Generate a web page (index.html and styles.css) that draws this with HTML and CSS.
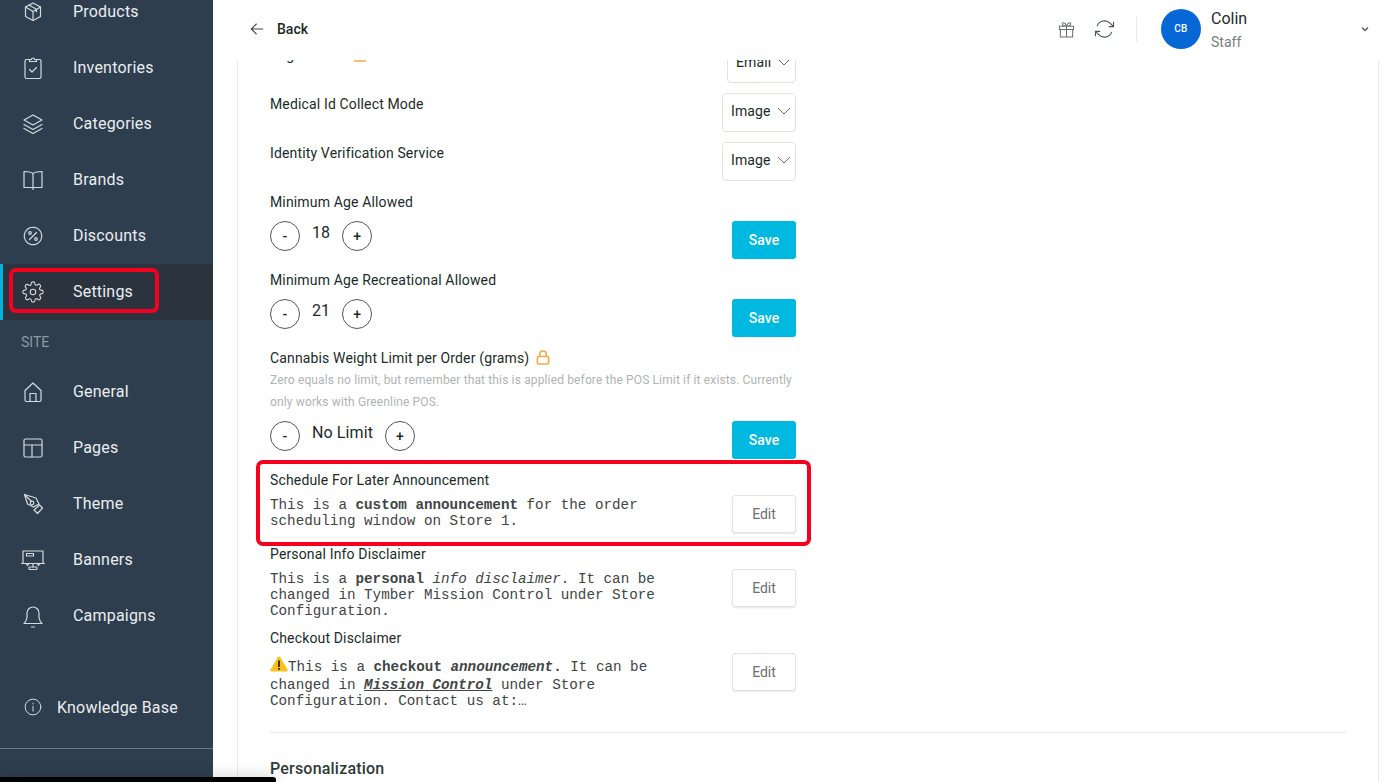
FILE: index.html
```html
<!DOCTYPE html>
<html lang="en">
<head>
<meta charset="utf-8">
<title>Settings</title>
<link rel="stylesheet" href="styles.css">
</head>
<body>
<div class="app">
  <aside class="sidebar">
    <nav class="nav">
      <a class="nav-item"><svg class="icon" viewBox="0 0 24 24"><path d="M12 3l7.500 4v9.500l-7.500 4-7.500-4V7z"/><path d="M4.500 7l7.500 4.500L19.500 7M12 11.500v9M8 5l7.500 4.300v2.500"/></svg><span>Products</span></a>
      <a class="nav-item"><svg class="icon" viewBox="0 0 24 24"><path d="M8.500 3.500H5.500a1.500 1.500 0 0 0-1.500 1.500v16a1.500 1.500 0 0 0 1.500 1.500h13a1.500 1.500 0 0 0 1.500-1.500V5a1.500 1.500 0 0 0-1.500-1.500h-3"/><path d="M8.500 5.500V3.500h2a1.500 1.500 0 0 1 3 0h2v2z"/><path d="M8.500 13.500l2.500 2.500 4.500-4.500"/></svg><span>Inventories</span></a>
      <a class="nav-item"><svg class="icon" viewBox="0 0 24 24"><path d="M12 3l9 5-9 5-9-5z"/><path d="M3 12.500l9 5 9-5M3 16.500l9 5 9-5"/></svg><span>Categories</span></a>
      <a class="nav-item"><svg class="icon" viewBox="0 0 24 24"><path d="M12 5.500C10 4 6.500 3.500 3 3.500v16h9zM12 5.500c2-1.500 5.500-2 9-2v16h-9zM12 5.500v16"/></svg><span>Brands</span></a>
      <a class="nav-item"><svg class="icon" viewBox="0 0 24 24"><circle cx="12" cy="12" r="8.700" stroke-dasharray="2.200 .8"/><path d="M8.500 15.500l7-7"/><circle cx="9" cy="9" r="1.300"/><circle cx="15" cy="15" r="1.300"/></svg><span>Discounts</span></a>
      <a class="nav-item nav-item-active"><svg class="icon" viewBox="-1 -1 26 26"><circle cx="12" cy="12" r="3"/><path d="M19.400 15a1.650 1.650 0 0 0 .33 1.820l.06.06a2 2 0 0 1-2.830 2.830l-.06-.06a1.650 1.650 0 0 0-2.800 1.170V21a2 2 0 0 1-4 0v-.09a1.650 1.650 0 0 0-2.800-1.170l-.06.06a2 2 0 0 1-2.830-2.830l.06-.06A1.650 1.650 0 0 0 3.090 14H3a2 2 0 0 1 0-4h.09a1.650 1.650 0 0 0 1.170-2.800l-.06-.06a2 2 0 0 1 2.830-2.830l.06.06A1.650 1.650 0 0 0 10 3.090V3a2 2 0 0 1 4 0v.09a1.650 1.650 0 0 0 2.800 1.170l.06-.06a2 2 0 0 1 2.830 2.830l-.06.06A1.650 1.650 0 0 0 20.910 10H21a2 2 0 0 1 0 4h-.09a1.650 1.650 0 0 0-1.510 1z"/></svg><span>Settings</span></a>
      <div class="nav-heading">SITE</div>
      <a class="nav-item"><svg class="icon" viewBox="0 0 24 24"><path d="M4 10.500L12 3l8 7.500V20a1.500 1.500 0 0 1-1.500 1.500h-13A1.500 1.500 0 0 1 4 20z"/><path d="M9 21.500v-8h6v8"/></svg><span>General</span></a>
      <a class="nav-item"><svg class="icon" viewBox="0 0 24 24"><rect x="3" y="3" width="18" height="18" rx="1.500"/><path d="M3 9h18M11 9v12"/></svg><span>Pages</span></a>
      <a class="nav-item"><svg class="icon" viewBox="0 0 24 24"><path d="M3.500 2.500l11.500 3.500 3 6-5.500 3-6-3z"/><path d="M3.500 2.500l7 7"/><circle cx="11" cy="11" r="1.800"/><path d="M18.500 13l3 3-5 5.500-3.500-3.500z"/></svg><span>Theme</span></a>
      <a class="nav-item"><svg class="icon" viewBox="0 0 24 24"><path d="M2 15.500V3h20v12.500"/><path d="M.5 15.500h23"/><rect x="5.500" y="5.500" width="7" height="2.500"/><path d="M5 15.500l1.500 2 1.500-2M16 15.500l1.500 2 1.500-2M12 15.500v3.500"/><rect x="8" y="19" width="8" height="2.500" rx=".8"/></svg><span>Banners</span></a>
      <a class="nav-item"><svg class="icon" viewBox="0 0 24 24"><path d="M3 19.500c1.500-1.500 2.500-3 3-6V9a6 6 0 0 1 12 0v4.500c.5 3 1.500 4.500 3 6z"/><path d="M10.500 23h3"/></svg><span>Campaigns</span></a>
    </nav>
    <a class="kb-link"><svg class="icon-kb" viewBox="0 0 24 24"><circle cx="12" cy="12" r="10.500"/><path d="M12 11v6.500M12 7v1"/></svg><span>Knowledge Base</span></a>
    <div class="sidebar-rule"></div>
  </aside>

  <main class="main">
    <header class="topbar">
      <a class="back"><svg class="back-arrow" viewBox="0 0 16 16"><path d="M15 8H1.500M7.500 2L1.500 8l6 6"/></svg><span>Back</span></a>
      <div class="top-actions">
        <svg class="gift" viewBox="0 0 18 18"><path d="M1.500 5.500h15v3.500h-15zM2.500 9v8h13V9M9 5.500V17M9 5.500C6 5.500 4.500 4.500 4.500 3S7.500.5 9 5.500zM9 5.500c3 0 4.500-1 4.500-2.500S10.500.5 9 5.500z"/></svg>
        <svg class="refresh" viewBox="0 0 22 20"><path d="M20.500 2.500v5h-5M1.500 17.500v-5h5"/><path d="M3.300 7A8.300 8.300 0 0 1 17 4l3.500 3.500M1.500 12.500L5 16a8.300 8.300 0 0 0 13.700-3"/></svg>
        <div class="top-divider"></div>
        <div class="avatar">CB</div>
        <div class="user">
          <div class="user-name">Colin</div>
          <div class="user-role">Staff</div>
        </div>
        <svg class="user-chevron" viewBox="0 0 8 6"><path d="M1 1.500l3 3 3-3"/></svg>
      </div>
    </header>

    <div class="viewport">
      <section class="panel">
        <div class="form">
          <div class="setting setting-inline">
            <div class="label">Registration <svg class="lock" viewBox="0 0 14 16"><rect x="1" y="7" width="12" height="8" rx="1.500"/><path d="M3.500 7V4.500a3.500 3.500 0 0 1 7 0V7"/></svg></div>
            <button class="select select-email"><span>Email</span><svg class="chevron" viewBox="0 0 14 8"><path d="M1 1l6 6 6-6"/></svg></button>
          </div>
          <div class="setting setting-inline">
            <div class="label">Medical Id Collect Mode</div>
            <button class="select"><span>Image</span><svg class="chevron" viewBox="0 0 14 8"><path d="M1 1l6 6 6-6"/></svg></button>
          </div>
          <div class="setting setting-inline">
            <div class="label">Identity Verification Service</div>
            <button class="select"><span>Image</span><svg class="chevron" viewBox="0 0 14 8"><path d="M1 1l6 6 6-6"/></svg></button>
          </div>

          <div class="setting">
            <div class="label">Minimum Age Allowed</div>
            <div class="controls controls-step">
              <div class="stepper"><button class="step">-</button><span class="step-value">18</span><button class="step">+</button></div>
              <button class="btn btn-save">Save</button>
            </div>
          </div>
          <div class="setting">
            <div class="label">Minimum Age Recreational Allowed</div>
            <div class="controls controls-step">
              <div class="stepper"><button class="step">-</button><span class="step-value">21</span><button class="step">+</button></div>
              <button class="btn btn-save">Save</button>
            </div>
          </div>
          <div class="setting">
            <div class="label">Cannabis Weight Limit per Order (grams) <svg class="lock" viewBox="0 0 14 16"><rect x="1" y="7" width="12" height="8" rx="1.500"/><path d="M3.500 7V4.500a3.500 3.500 0 0 1 7 0V7"/></svg></div>
            <p class="helper">Zero equals no limit, but remember that this is applied before the POS Limit if it exists. Currently only works with Greenline POS.</p>
            <div class="controls controls-step">
              <div class="stepper"><button class="step">-</button><span class="step-value">No Limit</span><button class="step">+</button></div>
              <button class="btn btn-save">Save</button>
            </div>
          </div>

          <div class="setting">
            <div class="label">Schedule For Later Announcement</div>
            <div class="controls">
              <div class="rich">This is a <b>custom announcement</b> for the order scheduling window on Store 1.</div>
              <button class="btn btn-edit">Edit</button>
            </div>
          </div>
          <div class="setting">
            <div class="label">Personal Info Disclaimer</div>
            <div class="controls">
              <div class="rich">This is a <b>personal</b> <i>info disclaimer</i>. It can be changed in Tymber Mission Control under Store Configuration.</div>
              <button class="btn btn-edit">Edit</button>
            </div>
          </div>
          <div class="setting">
            <div class="label">Checkout Disclaimer</div>
            <div class="controls">
              <div class="rich"><svg class="warn" viewBox="0 0 18 22"><path class="warn-fill" d="M9 1.500c.6 0 1 .3 1.300.8l7.400 12.400c.4.800-.1 1.800-1 1.800H1.300c-.9 0-1.400-1-1-1.800L7.700 2.300C8 1.800 8.400 1.500 9 1.500z"/><path class="warn-mark" d="M9 5.500v6.500M9 13v1.800"/></svg>This is a <b>checkout</b> <b><i>announcement</i>.</b> It can be changed in <b><i><u>Mission Control</u></i></b> under Store Configuration. Contact us at:…</div>
              <button class="btn btn-edit">Edit</button>
            </div>
          </div>
        </div>
        <hr class="rule">
        <h2 class="section-title">Personalization</h2>
      </section>
    </div>
  </main>
</div>

<div class="mark mark-settings"></div>
<div class="mark mark-announcement"></div>
<div class="dock"></div>
</body>
</html>
```

FILE: styles.css
```css
* { box-sizing: border-box; }

html, body {
  margin: 0;
  height: 782px;
  overflow: hidden;
  background: #fff;
}

body {
  font-family: Roboto, "Liberation Sans", sans-serif;
  color: #1c2b27;
}

button {
  font-family: inherit;
  margin: 0;
  padding: 0;
  cursor: pointer;
}

.app {
  display: flex;
  height: 782px;
}

/* Sidebar */
.sidebar {
  flex: 0 0 213px;
  display: flex;
  flex-direction: column;
  background: #2f3e4e;
  color: #e9edf0;
  overflow: hidden;
}

.nav {
  margin-top: -16px;
}

.nav-item {
  display: flex;
  align-items: center;
  height: 56px;
  padding: 0 0 1px 21px;
  font-size: 16px;
  letter-spacing: .2px;
}

.nav-item-active {
  background: #2b343e;
  box-shadow: inset 3px 0 0 #00b4dc;
}

.icon {
  flex: 0 0 24px;
  width: 24px;
  height: 24px;
  margin-right: 28px;
  fill: none;
  stroke: #d4d9dd;
  stroke-width: 1.200;
  stroke-linejoin: round;
  stroke-linecap: round;
}

.nav-heading {
  height: 44px;
  padding: 13px 0 0 21px;
  font-size: 14px;
  line-height: 18px;
  color: #8e99a3;
}

.kb-link {
  display: flex;
  align-items: center;
  height: 24px;
  margin-top: 51px;
  padding-left: 24px;
  font-size: 16px;
  letter-spacing: .2px;
}

.icon-kb {
  width: 18px;
  height: 18px;
  margin-right: 15px;
  fill: none;
  stroke: #d4d9dd;
  stroke-width: 1.300;
  stroke-linecap: round;
}

.sidebar-rule {
  height: 1px;
  margin-top: 29px;
  background: #6c7781;
}

/* Main column */
.main {
  flex: 1;
  min-width: 0;
  display: flex;
  flex-direction: column;
}

.topbar {
  flex: 0 0 60px;
  display: flex;
  align-items: flex-start;
  justify-content: space-between;
  padding-left: 37px;
}

.back {
  display: flex;
  align-items: center;
  height: 58px;
  font-size: 14px;
  font-weight: 500;
}

.back-arrow {
  width: 14px;
  height: 14px;
  margin-right: 13px;
  fill: none;
  stroke: #444;
  stroke-width: 1.300;
}

.top-actions {
  display: flex;
  align-items: center;
  height: 58px;
  padding-right: 14px;
}

.gift {
  width: 17px;
  height: 17px;
  fill: none;
  stroke: #6b6f6f;
  stroke-width: 1.100;
}

.refresh {
  width: 21px;
  height: 20px;
  margin-left: 19px;
  fill: none;
  stroke: #445553;
  stroke-width: 1.100;
}

.top-divider {
  width: 1px;
  height: 25px;
  margin: 0 24px 0 21px;
  background: #e6e8f0;
}

.avatar {
  width: 40px;
  height: 40px;
  border-radius: 50%;
  background: #0667d6;
  color: #fff;
  font-size: 10px;
  font-weight: 500;
  line-height: 40px;
  text-align: center;
  letter-spacing: .3px;
}

.user {
  flex: 1;
  width: 150px;
  margin-left: 10px;
}

.user-name {
  font-size: 16px;
  line-height: 20px;
  margin-top: 2px;
}

.user-role {
  font-size: 14px;
  line-height: 20px;
  margin-top: 3px;
  color: #77807e;
}

.user-chevron {
  width: 8px;
  height: 6px;
  fill: none;
  stroke: #4d5a58;
  stroke-width: 1.300;
}

.viewport {
  flex: 1;
  min-height: 0;
  overflow: hidden;
  margin: 0 4px 0 24px;
}

.panel {
  height: 100%;
  padding: 0 32px;
  border-left: 1px solid #e8e8f3;
  border-right: 1px solid #e8e8f3;
  overflow: hidden;
}

/* Form */
.form {
  width: 526px;
  margin-top: -16px;
}

.setting {
  margin-bottom: 10px;
}

.setting-inline {
  display: flex;
  justify-content: space-between;
  align-items: flex-start;
}

.label {
  font-size: 14px;
  line-height: 22px;
  letter-spacing: .15px;
}

.lock {
  width: 14px;
  height: 15px;
  margin-left: 3px;
  vertical-align: -2px;
  fill: none;
  stroke: #f7a94b;
  stroke-width: 1.700;
}

.select {
  display: flex;
  align-items: center;
  justify-content: space-between;
  width: 74px;
  height: 39px;
  padding: 0 4px 3px 8px;
  background: #fff;
  border: 1px solid #e3e3de;
  border-radius: 4px;
  font-size: 14px;
  color: #1c2b27;
  letter-spacing: .1px;
}

.select-email {
  width: 69px;
}

.chevron {
  width: 14px;
  height: 8px;
  fill: none;
  stroke: #666;
  stroke-width: 1;
}

.helper {
  margin: 0;
  font-size: 12px;
  line-height: 22px;
  letter-spacing: .14px;
  color: #b1b3b3;
}

.controls {
  display: flex;
  justify-content: space-between;
  align-items: flex-start;
  margin-top: 4px;
}

.controls-step {
  margin-top: 8px;
}

.stepper {
  display: flex;
  align-items: flex-start;
}

.step {
  width: 30px;
  height: 30px;
  border: 1px solid #555;
  border-radius: 50%;
  background: #fff;
  font-size: 14px;
  font-weight: 500;
  color: #1c2b27;
}

.step-value {
  margin: 0 12px;
  font-size: 16px;
  line-height: 24px;
  letter-spacing: .1px;
}

.btn {
  flex: 0 0 64px;
  width: 64px;
  height: 38px;
  border-radius: 3px;
  font-size: 14px;
}

.btn-save {
  border: 0;
  background: #00b9e0;
  color: #fff;
  font-weight: 500;
}

.btn-edit {
  border: 1px solid #e3e3de;
  background: #fff;
  color: #6c6f6f;
  box-shadow: 0 1px 2px rgba(0, 0, 0, .1);
}

.rich {
  width: 420px;
  margin-bottom: -2px;
  padding-top: 2px;
  font-family: "Liberation Mono", monospace;
  font-size: 14.25px;
  line-height: 16px;
  color: #404545;
}

.warn {
  width: 18px;
  height: 22px;
  vertical-align: -6px;
}

.warn-fill {
  fill: #fbc21e;
}

.warn-mark {
  fill: none;
  stroke: #3a3320;
  stroke-width: 2;
}

.rule {
  height: 1px;
  margin: 25px 0 0;
  border: 0;
  background: #e8e8f3;
}

.section-title {
  margin: 24px 0 0;
  font-size: 16px;
  font-weight: 500;
  line-height: 24px;
  letter-spacing: .2px;
  color: #2f3b38;
}

/* Annotations and overlays */
.mark {
  position: absolute;
  border: 4px solid #f5001e;
  border-radius: 7px;
}

.mark-settings {
  left: 9px;
  top: 268px;
  width: 150px;
  height: 45px;
}

.mark-announcement {
  left: 256px;
  top: 460px;
  width: 555px;
  height: 86px;
}

.dock {
  position: absolute;
  left: 0;
  top: 777px;
  width: 276px;
  height: 5px;
  background: #000;
  border-top-right-radius: 3px;
  box-shadow: 0 0 14px rgba(0, 0, 0, .3);
}
```
